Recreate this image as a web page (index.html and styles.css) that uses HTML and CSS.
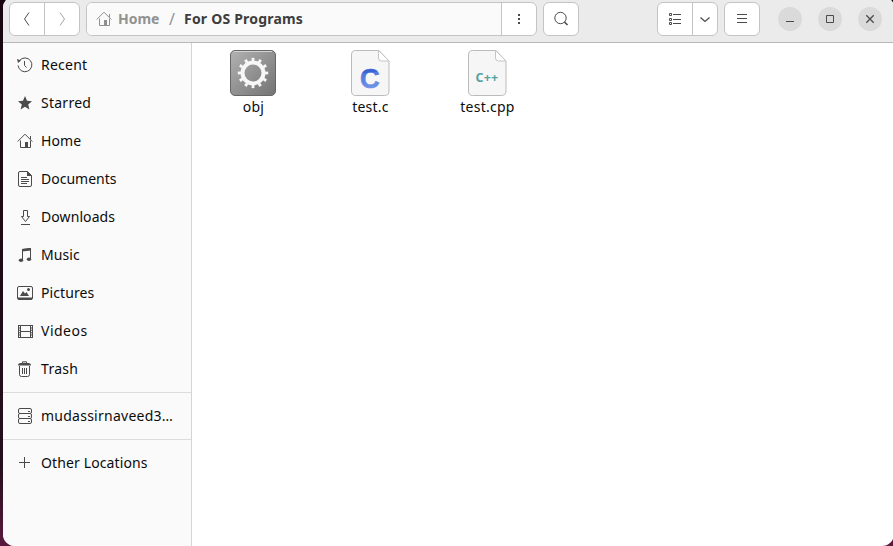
FILE: index.html
```html
<!DOCTYPE html>
<html lang="en">
<head>
<meta charset="utf-8">
<title>For OS Programs</title>
<link rel="stylesheet" href="styles.css">
</head>
<body>
<div class="window">
  <header class="header">
    <div class="group nav">
      <button class="btn"><svg width="16" height="16" viewBox="0 0 16 16"><path d="M10 1.500 5.500 8l4.500 6.500"/></svg></button>
      <button class="btn dim"><svg width="16" height="16" viewBox="0 0 16 16"><path d="M6 1.500 10.500 8 6 14.500"/></svg></button>
    </div>
    <div class="group path">
      <div class="crumbs">
        <svg class="faded" width="16" height="16" viewBox="0 0 16 16"><path d="M.7 8.500 8 1.200l7.300 7.300M3.500 7.500v7h10v-7M13.500 6V3"/><path class="fill" d="M8 9h3v5.500H8z"/></svg>
        <span class="crumb parent">Home</span><span class="slash">/</span><span class="crumb current">For OS Programs</span>
      </div>
      <button class="btn"><svg width="16" height="16" viewBox="0 0 16 16"><path class="fill" d="M7 3h2v2H7zM7 7h2v2H7zM7 11h2v2H7z"/></svg></button>
    </div>
    <div class="group search"><button class="btn"><svg width="16" height="16" viewBox="0 0 16 16"><circle cx="7.500" cy="7" r="5.700"/><path stroke-width="1.600" d="m11.500 11 3 3"/></svg></button></div>
    <div class="group view">
      <button class="btn"><svg width="16" height="16" viewBox="0 0 16 16"><path d="M2.500 2.500h2v2h-2zM2.500 7.500h2v2h-2zM2.500 11.500h2v2h-2zM6 3.500h8M6 8.500h8M6 12.500h8"/></svg></button>
      <button class="btn small"><svg width="16" height="16" viewBox="0 0 16 16"><path stroke-width="1.300" d="m3.500 6.500 4.500 4 4.500-4"/></svg></button>
    </div>
    <div class="group menu"><button class="btn"><svg width="16" height="16" viewBox="0 0 16 16"><path d="M3 3.500h10M3 7.500h10M3 11.500h10"/></svg></button></div>
    <div class="controls">
      <button class="ctl"><svg width="16" height="16" viewBox="0 0 16 16"><path d="M4 10.500h8"/></svg></button>
      <button class="ctl"><svg width="16" height="16" viewBox="0 0 16 16"><path d="M4.500 4.500h7v7h-7z"/></svg></button>
      <button class="ctl"><svg width="16" height="16" viewBox="0 0 16 16"><path stroke-width="1.300" d="m4.300 4.300 7.400 7.400M11.700 4.300l-7.400 7.400"/></svg></button>
    </div>
  </header>
  <div class="body">
    <nav class="sidebar">
      <a class="row recent"><svg width="16" height="16" viewBox="0 0 16 16"><path d="M2.600 3.500A6.900 6.900 0 1 1 1.100 8.500M7.500 4v4.500l2 2"/><path class="fill" d="M0 2l4 1.500L1 6z"/></svg><span>Recent</span></a>
      <a class="row starred"><svg width="16" height="16" viewBox="0 0 16 16"><path class="fill" d="m8 1 2 4.800 5 .4-3.800 3.300 1.200 5L8 11.800l-4.400 2.700 1.200-5L1 6.200l5-.4z"/></svg><span>Starred</span></a>
      <a class="row"><svg width="16" height="16" viewBox="0 0 16 16"><path d="M.7 8.500 8 1.200l7.300 7.300M3.500 7.500v7h10v-7M13.500 6V3"/><path class="fill" d="M8 9h3v5.500H8z"/></svg><span>Home</span></a>
      <a class="row docs"><svg width="16" height="16" viewBox="0 0 16 16"><path d="M3 .5h7.500l4 4V14q0 1.500-1.500 1.500H3Q1.500 15.500 1.500 14V2Q1.500.5 3 .5zM4 6.500h6M4 8.500h8M4 10.500h8M4 12.500h6"/><path class="fill" d="M10 0v5h5z"/></svg><span>Documents</span></a>
      <a class="row"><svg width="16" height="16" viewBox="0 0 16 16"><path d="M6.500 1.500h4v6h2l-4 5-4-5h2zM4 15.500h9"/></svg><span>Downloads</span></a>
      <a class="row"><svg width="16" height="16" viewBox="0 0 16 16"><path d="M5.500 13V2.500l8-1V12"/><path class="fill" d="M5 2l9-1v2.500l-9 1z"/><ellipse class="fill" cx="4" cy="13.300" rx="2.200" ry="1.800"/><ellipse class="fill" cx="12" cy="12.300" rx="2.200" ry="1.800"/></svg><span>Music</span></a>
      <a class="row"><svg width="16" height="16" viewBox="0 0 16 16"><rect x=".5" y="1.500" width="15" height="13" rx="1.500"/><path class="fill" d="M1 12.500h14v2H1zM3 11l3-5 2 2.500L9.500 7l2.500 4z"/><circle class="fill" cx="11.500" cy="4.500" r="1.500"/></svg><span>Pictures</span></a>
      <a class="row videos"><svg width="16" height="16" viewBox="0 0 16 16"><path d="M3.500 2v13M13.500 2v13M3.500 2.500h10M3.500 8.500h10M3.500 14.500h10M1.500 2v13M15.500 2v13"/><path stroke-dasharray="1 1.400" stroke-width="2" d="M2.500 2v13M14.500 2v13"/></svg><span>Videos</span></a>
      <a class="row trash"><svg width="16" height="16" viewBox="0 0 16 16"><path d="M2.500 5v8.500q0 2 2 2h6q2 0 2-2V5M5.500 7v6M7.500 7v6M9.500 7v6M5.500 2V.8h4V2"/><path class="fill" d="M1 4.500Q1 2 3.500 2h8Q14 2 14 4.500z"/></svg><span>Trash</span></a>
      <hr>
      <a class="row server"><svg width="16" height="16" viewBox="0 0 16 16"><rect x="1.500" y=".5" width="13" height="5" rx="1.500"/><rect x="1.500" y="5.500" width="13" height="5" rx="1.500"/><rect x="1.500" y="10.500" width="13" height="5" rx="1.500"/><path d="M11 3.500h2M11 8.500h2M11 13.500h2"/></svg><span>mudassirnaveed3…</span></a>
      <hr>
      <a class="row other"><svg width="16" height="16" viewBox="0 0 16 16"><path d="M7.500 2v11M2 7.500h11"/></svg><span>Other Locations</span></a>
    </nav>
    <main class="files">
      <div class="file">
        <svg width="48" height="48" viewBox="0 0 48 48">
          <defs><linearGradient id="metal" x1="0" y1="0" x2="1" y2="1"><stop offset="0" stop-color="#b2b2b2"/><stop offset=".5" stop-color="#929292"/><stop offset="1" stop-color="#737373"/></linearGradient></defs>
          <rect x="1.500" y="1.500" width="45" height="45" rx="4.500" fill="url(#metal)" stroke="#666"/>
          <path d="M5 2.500h38" stroke="#d4d4d4"/>
          <circle cx="24" cy="24" r="10.500" stroke="#f7f7f7" stroke-width="4"/>
          <circle cx="24" cy="24" r="13.600" stroke="#f7f7f7" stroke-width="3.200" pathLength="120" stroke-dasharray="4 6" stroke-dashoffset="2"/>
        </svg><span>obj</span>
      </div>
      <div class="file">
        <svg width="48" height="48" viewBox="0 0 48 48"><path d="M9.500 1.500h23.500l10 10.500v30q0 4.500-4.500 4.500h-29Q5.500 46.500 5.500 42V6q0-4.500 4-4.500z" fill="#f6f6f6" stroke="#bbb"/><path d="M32.500 1.500V9q0 3 3 3H43z" fill="#fff" stroke="#c4c4c4"/><defs><linearGradient id="blue" gradientUnits="userSpaceOnUse" x1="14" y1="18" x2="17" y2="39"><stop offset=".3" stop-color="#3963d2"/><stop offset=".34" stop-color="#4f76dc"/><stop offset="1" stop-color="#6f90e6"/></linearGradient></defs><text class="c-mark" x="14" y="38.500" fill="url(#blue)" textLength="20" lengthAdjust="spacingAndGlyphs">C</text></svg><span>test.c</span>
      </div>
      <div class="file">
        <svg width="48" height="48" viewBox="0 0 48 48"><path d="M9.500 1.500h23.500l10 10.500v30q0 4.500-4.500 4.500h-29Q5.500 46.500 5.500 42V6q0-4.500 4-4.500z" fill="#f6f6f6" stroke="#bbb"/><path d="M32.500 1.500V9q0 3 3 3H43z" fill="#fff" stroke="#c4c4c4"/><text class="cpp-mark" x="12.500" y="33" textLength="23" lengthAdjust="spacingAndGlyphs">C++</text></svg><span>test.cpp</span>
      </div>
    </main>
  </div>
</div>
</body>
</html>
```
FILE: styles.css
```css
* { box-sizing: border-box; }
body {
  margin: 0;
  width: 893px;
  height: 546px;
  overflow: hidden;
  background: linear-gradient(#17050f, #23101c 85%, #5a1a3c);
  font: 14px/20px "Noto Sans", "Open Sans", sans-serif;
  color: #0c0c0c;
}
.window {
  margin: -4px 0 0 3px;
  width: 891px;
  height: 550px;
  border-radius: 12px;
  overflow: hidden;
  background: #fff;
  display: flex;
  flex-direction: column;
}
svg { display: block; flex: none; fill: none; stroke: #4b4b4b; }
.fill { fill: #4b4b4b; stroke: none; }
.header {
  height: 47px;
  flex: none;
  display: flex;
  padding: 6px 0 0 6px;
  background: #ebebeb;
  border-bottom: 1px solid #b8b8b8;
}
.group {
  height: 34px;
  display: flex;
  border: 1px solid #c4c4c4;
  border-radius: 6px;
  background: #fff;
  overflow: hidden;
}
.btn {
  flex: 1;
  padding: 0;
  border: 0;
  background: none;
  display: flex;
  align-items: center;
  justify-content: center;
}
.btn + .btn, .path .btn { border-left: 1px solid #c4c4c4; }
.nav { width: 71px; margin-right: 6px; }
.dim svg { opacity: .5; }
.path { width: 451px; margin-right: 6px; }
.crumbs {
  width: 414px;
  padding-left: 9px;
  background: #fafafa;
  display: flex;
  align-items: center;
  font-weight: 700;
}
.path .btn { flex: 1; }
.faded { opacity: .6; }
.crumb.parent { width: 41px; margin-left: 6px; color: #929292; }
.slash { width: 7px; margin: 0 8px 0 10px; color: #929292; font-weight: 400; font-size: 16px; }
.current { color: #3d3d3d; white-space: nowrap; letter-spacing: .2px; }
.search { width: 36px; margin-right: 78px; }
.view { width: 61px; margin-right: 6px; }
.view .btn { flex: 0 0 34px; }
.view .small { flex: 1; }
.menu { width: 36px; margin-right: 18px; }
.controls { display: flex; gap: 16px; padding-top: 5px; }
.ctl {
  width: 24px;
  height: 24px;
  padding: 4px;
  border: 0;
  border-radius: 50%;
  background: #dadada;
}
.body { flex: 1; display: flex; }
.sidebar { width: 189px; padding-top: 3px; background: #fafafa; border-right: 1px solid #d5d5d5; }
.row { height: 38px; padding-left: 14px; display: flex; align-items: center; gap: 8px; white-space: nowrap; letter-spacing: .08px; }
.docs { letter-spacing: 0; }
.recent, .starred, .server { letter-spacing: .25px; }
.videos { letter-spacing: .5px; }
.trash { letter-spacing: .3px; }
.other { letter-spacing: .12px; }
hr { height: 1px; margin: 4px 0; border: 0; background: #dcdcdc; }
.files { flex: 1; display: flex; align-items: flex-start; padding: 6px 0 0 2px; }
.file { width: 117px; display: flex; flex-direction: column; align-items: center; letter-spacing: .25px; }
.file span { margin-left: 2px; }
.c-mark { font: 700 28px "Liberation Sans", sans-serif; stroke: url(#blue); stroke-width: .6px; }
.cpp-mark { font: 700 13px "Noto Sans", sans-serif; fill: #56a3a1; stroke: none; }
```
